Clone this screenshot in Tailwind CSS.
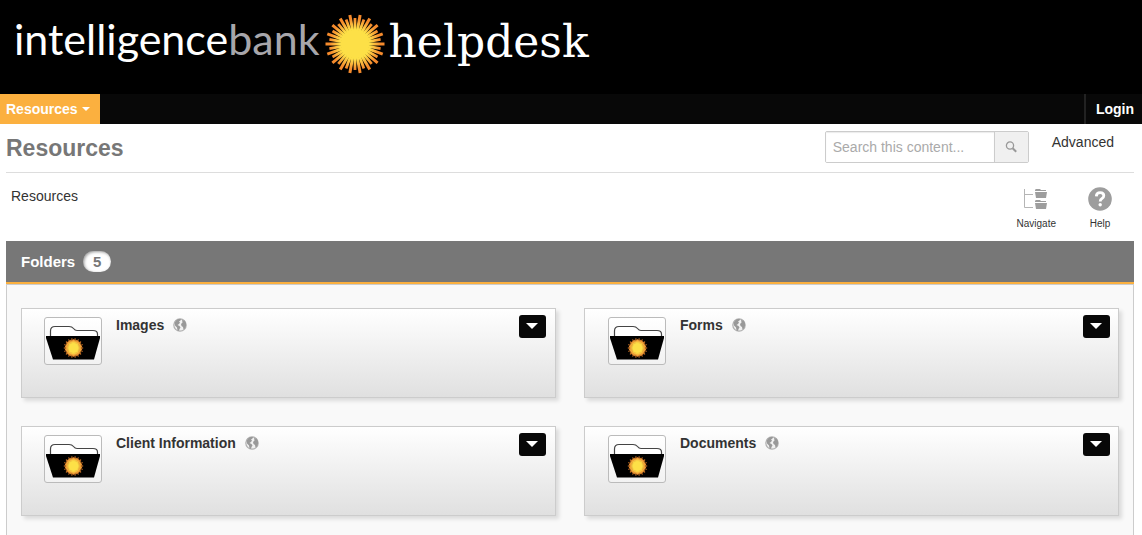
<!DOCTYPE html>
<html lang="en">
<head>
<meta charset="utf-8">
<title>IntelligenceBank Helpdesk - Resources</title>
<script src="https://cdn.jsdelivr.net/npm/@tailwindcss/browser@4"></script>
</head>
<body class="flex min-h-screen flex-col bg-white font-['Liberation_Sans',Arial,sans-serif] text-sm text-[#333]">

<!-- Shared drawings -->
<svg class="absolute size-0" aria-hidden="true">
  <defs>
    <radialGradient id="ray" gradientUnits="userSpaceOnUse" cx="0" cy="0" r="30">
      <stop offset="0.5" stop-color="#fde047"/>
      <stop offset="0.7" stop-color="#fbb03b"/>
      <stop offset="0.85" stop-color="#f58a2c"/>
    </radialGradient>
    <g id="rays">
      <path id="longray" d="M-1.5 -29.5H1.5V29.5H-1.5Z"/>
      <use href="#longray" transform="rotate(20)"/>
      <use href="#longray" transform="rotate(40)"/>
      <path id="shortray" d="M-1.400 -26H1.400V26H-1.400Z" transform="rotate(10)"/>
      <use href="#shortray" transform="rotate(20)"/>
      <use href="#shortray" transform="rotate(40)"/>
    </g>
    <symbol id="sun" viewBox="-30 -30 60 60">
      <g fill="url(#ray)">
        <use href="#rays" transform="rotate(10)"/>
        <use href="#rays" transform="rotate(70)"/>
        <use href="#rays" transform="rotate(130)"/>
      </g>
      <circle r="14" fill="#fde047"/>
    </symbol>
    <symbol id="folder" viewBox="0 0 56 46">
      <path d="M5.500 19V13Q5.500 8.500 10 8.500H24Q27 8.500 28.500 10.500Q30 12.500 32 12.500H48Q52.500 12.500 52.500 16V19" fill="#fff" stroke="#444" stroke-width="1.200"/>
      <path d="M1 18H55V20L49 41.500H8L1 20Z" fill="#000"/>
      <circle cx="28.500" cy="30" r="8" fill="#c9822c"/>
      <use href="#sun" x="18.500" y="20" width="20" height="20"/>
    </symbol>
    <symbol id="globe" viewBox="0 0 14 14">
      <circle cx="7" cy="7" r="6.200" fill="#f0f0f0" stroke="#b0b0b0" stroke-width="1.200"/>
      <path d="M1.500 5L3 2.500L5.500 1L8 1L7.500 2.500L6 3.500L7 4.500L6 6L4.500 7L6.500 8L7.500 9.500L6.500 11L6 13L4.500 12.500L4 9.500L2 7.500ZM9 2L11.500 2.500L13 5V8L12 10.500L10.500 11.500L10 9L8.500 8L8 6L9.500 4.500Z" fill="#999"/>
    </symbol>
    <symbol id="caret" viewBox="0 0 12 6"><path d="M0 0H12L6 6Z" fill="#fff"/></symbol>
  </defs>
</svg>

<header class="bg-black">
  <a href="#" class="flex h-[94px] items-start pl-[14px] pt-3 leading-[60px] text-white">
    <span class="font-[Lato,sans-serif] text-[43px] leading-[54px]">intelligence<span class="text-[#a7a6ab]">bank</span></span>
    <svg class="ml-[5px] mt-[2px] size-[60px] shrink-0" aria-hidden="true"><use href="#sun"/></svg>
    <span class="ml-1 font-['DejaVu_Serif',serif] text-[44px]">helpdesk</span>
  </a>
  <nav class="flex h-[30px] items-stretch justify-between bg-[#080808] font-bold text-white">
    <button type="button" class="flex items-center gap-1 bg-[#fbb03f] pl-[6px] pr-[10px]">Resources
      <svg class="h-1 w-2" aria-hidden="true"><use href="#caret"/></svg>
    </button>
    <a href="#" class="flex items-center border-l-2 border-[#222] pl-[10px] pr-2">Login</a>
  </nav>
</header>

<main class="flex flex-1 flex-col pl-[6px] pr-2">
  <div class="flex h-[49px] items-start justify-between border-b border-[#ddd] pt-[7px]">
    <h1 class="text-[23px] leading-[34px] font-bold text-[#777]">Resources</h1>
    <form class="flex items-start pr-5">
      <div class="flex h-8 w-[204px] overflow-hidden rounded-[2px] border border-[#ccc]">
        <input type="search" aria-label="Search this content" placeholder="Search this content..." class="min-w-0 flex-1 bg-white px-[7px] shadow-[inset_0_1px_1px_rgba(0,0,0,0.08)] outline-none placeholder:text-[#aaa]">
        <button type="button" aria-label="Search" class="flex w-[34px] items-center justify-center border-l border-[#ccc] bg-[#f0f0f0]">
          <svg class="size-3" viewBox="0 0 12 12" fill="none" stroke="#999" aria-hidden="true"><circle cx="5" cy="4.500" r="3.600" stroke-width="1.300"/><path d="M7.600 7.200L11.200 10.800" stroke-width="2"/></svg>
        </button>
      </div>
      <a href="#" class="ml-[23px] leading-[22px]">Advanced</a>
    </form>
  </div>

  <div class="flex h-[68px] shrink-0 items-start justify-between">
    <a href="#" class="ml-[5px] mt-[13px] leading-5">Resources</a>
    <div class="mr-[21px] mt-[13px] flex gap-[31px] text-[10px] leading-3">
      <a href="#" class="flex flex-col items-center gap-[6px]">
        <svg class="size-[26px]" viewBox="0 0 26 26" aria-hidden="true">
          <path d="M1.500 3V21.500H10M1.500 8.500H10" fill="none" stroke="#b5b5b5"/>
          <path d="M12 4.500Q12 3 13 3H17L18 4H23V5H12ZM12 6H24L23 12H13ZM12 15.500Q12 14 13 14H17L18 15H23V16H12ZM12 17H24L23 23H13Z" fill="#9d9d9d"/>
        </svg>
        Navigate
      </a>
      <a href="#" class="flex flex-col items-center gap-[6px]">
        <svg class="size-[26px]" viewBox="0 0 26 26" aria-hidden="true">
          <circle cx="13" cy="13" r="11.800" fill="#9d9d9d"/>
          <path d="M9.300 10.300Q9.500 6.700 13.200 6.700Q16.800 6.700 16.800 9.800Q16.800 11.500 15 12.500Q13.200 13.500 13.200 15.500" fill="none" stroke="#fff" stroke-width="2.800"/>
          <circle cx="13.200" cy="18.800" r="1.700" fill="#fff"/>
        </svg>
        Help
      </a>
    </div>
  </div>

  <section class="flex flex-1 flex-col">
    <h2 class="flex h-[43px] shrink-0 items-center gap-2 border-b-2 border-[#fbb03f] bg-[#777] pl-[15px] text-[15px] font-bold text-white">Folders
      <span class="flex h-[21px] w-7 items-center justify-center rounded-full bg-white text-[#777] shadow-[inset_1px_1px_3px_rgba(0,0,0,0.4)]">5</span>
    </h2>
    <ul class="grid flex-1 grid-cols-2 content-start gap-7 border border-b-0 border-[#ccc] bg-[#f9f9f9] px-[14px] pt-[23px]">
      <li class="flex h-[90px] items-start border border-[#ccc] bg-linear-to-b from-white to-[#e0e0e0] pl-[22px] pr-[9px] shadow-[3px_3px_4px_rgba(0,0,0,0.12)]">
        <a href="#" class="mt-2 flex h-12 w-[58px] shrink-0 rounded-[3px] border border-[#bbb] bg-linear-to-b from-white to-[#f2f2f2]" aria-label="Open Images"><svg class="size-full" aria-hidden="true"><use href="#folder"/></svg></a>
        <a href="#" class="ml-[14px] mt-[6px] leading-5 font-bold">Images</a>
        <svg class="ml-[9px] mt-[9px] size-[14px] shrink-0" aria-hidden="true"><use href="#globe"/></svg>
        <button type="button" aria-label="Images options" class="ml-auto mt-[6px] flex h-[23px] w-[27px] items-center justify-center rounded-[3px] bg-[#080808] pr-px pb-px"><svg class="h-[6px] w-3" aria-hidden="true"><use href="#caret"/></svg></button>
      </li>
      <li class="flex h-[90px] items-start border border-[#ccc] bg-linear-to-b from-white to-[#e0e0e0] pl-[23px] pr-[8px] shadow-[3px_3px_4px_rgba(0,0,0,0.12)]">
        <a href="#" class="mt-2 flex h-12 w-[58px] shrink-0 rounded-[3px] border border-[#bbb] bg-linear-to-b from-white to-[#f2f2f2]" aria-label="Open Forms"><svg class="size-full" aria-hidden="true"><use href="#folder"/></svg></a>
        <a href="#" class="ml-[14px] mt-[6px] leading-5 font-bold">Forms</a>
        <svg class="ml-[9px] mt-[9px] size-[14px] shrink-0" aria-hidden="true"><use href="#globe"/></svg>
        <button type="button" aria-label="Forms options" class="ml-auto mt-[6px] flex h-[23px] w-[27px] items-center justify-center rounded-[3px] bg-[#080808] pr-px pb-px"><svg class="h-[6px] w-3" aria-hidden="true"><use href="#caret"/></svg></button>
      </li>
      <li class="flex h-[90px] items-start border border-[#ccc] bg-linear-to-b from-white to-[#e0e0e0] pl-[22px] pr-[9px] shadow-[3px_3px_4px_rgba(0,0,0,0.12)]">
        <a href="#" class="mt-2 flex h-12 w-[58px] shrink-0 rounded-[3px] border border-[#bbb] bg-linear-to-b from-white to-[#f2f2f2]" aria-label="Open Client Information"><svg class="size-full" aria-hidden="true"><use href="#folder"/></svg></a>
        <a href="#" class="ml-[14px] mt-[6px] leading-5 font-bold">Client Information</a>
        <svg class="ml-[9px] mt-[9px] size-[14px] shrink-0" aria-hidden="true"><use href="#globe"/></svg>
        <button type="button" aria-label="Client Information options" class="ml-auto mt-[6px] flex h-[23px] w-[27px] items-center justify-center rounded-[3px] bg-[#080808] pr-px pb-px"><svg class="h-[6px] w-3" aria-hidden="true"><use href="#caret"/></svg></button>
      </li>
      <li class="flex h-[90px] items-start border border-[#ccc] bg-linear-to-b from-white to-[#e0e0e0] pl-[23px] pr-[8px] shadow-[3px_3px_4px_rgba(0,0,0,0.12)]">
        <a href="#" class="mt-2 flex h-12 w-[58px] shrink-0 rounded-[3px] border border-[#bbb] bg-linear-to-b from-white to-[#f2f2f2]" aria-label="Open Documents"><svg class="size-full" aria-hidden="true"><use href="#folder"/></svg></a>
        <a href="#" class="ml-[14px] mt-[6px] leading-5 font-bold">Documents</a>
        <svg class="ml-[9px] mt-[9px] size-[14px] shrink-0" aria-hidden="true"><use href="#globe"/></svg>
        <button type="button" aria-label="Documents options" class="ml-auto mt-[6px] flex h-[23px] w-[27px] items-center justify-center rounded-[3px] bg-[#080808] pr-px pb-px"><svg class="h-[6px] w-3" aria-hidden="true"><use href="#caret"/></svg></button>
      </li>
    </ul>
  </section>
</main>
</body>
</html>
